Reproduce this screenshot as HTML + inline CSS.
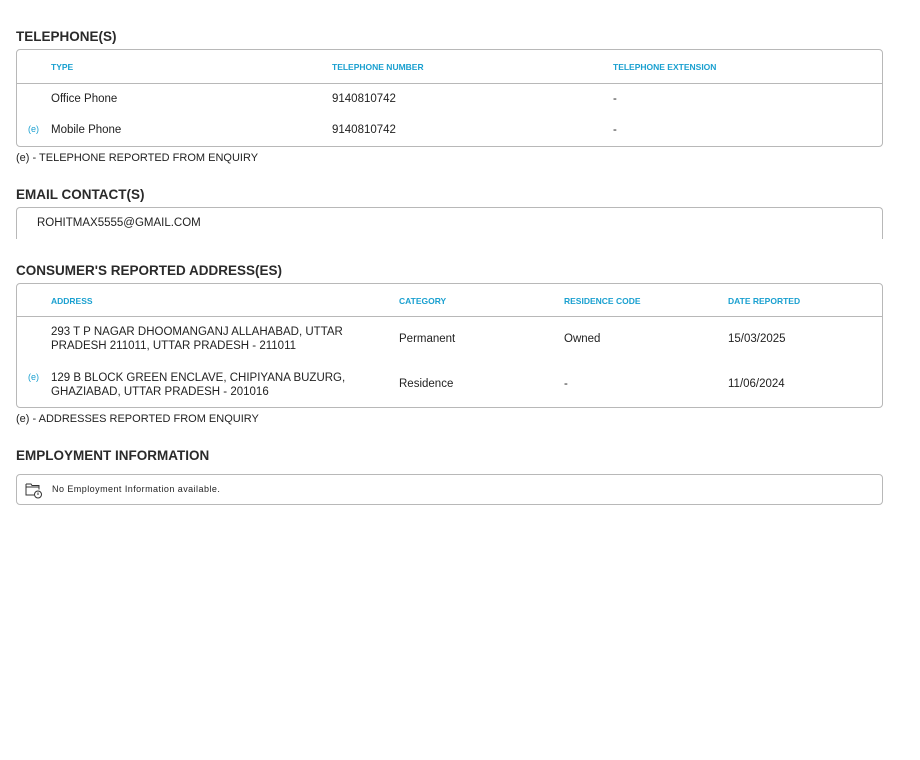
<!DOCTYPE html>
<html><head><style>
body{margin:0;width:920px;height:760px;background:#fff;font-family:"Liberation Sans",sans-serif;color:#222;position:relative}
.a{position:absolute;white-space:nowrap}
.h{font-size:13.5px;font-weight:bold;color:#2a2a2a;letter-spacing:0px}
.box{position:absolute;border:1px solid #b8b8b8;border-radius:4px;box-sizing:border-box}
.th{font-size:8.5px;font-weight:bold;color:#1aa0d0}
.t{font-size:11.5px}
.e{font-size:9px;color:#1aa0d0}
.line{position:absolute;height:1px;background:#b8b8b8}
</style></head><body>
<div class="a h" style="left:16px;top:29px">TELEPHONE(S)</div>
<div class="box" style="left:16px;top:49px;width:867px;height:98px"></div>
<div class="line" style="left:17px;top:83px;width:865px"></div>
<div class="a th" style="left:51px;top:62px">TYPE</div>
<div class="a th" style="left:332px;top:62px">TELEPHONE NUMBER</div>
<div class="a th" style="left:613px;top:62px">TELEPHONE EXTENSION</div>
<div class="a t" style="left:51px;top:93px">Office Phone</div>
<div class="a t" style="left:332px;top:93px">9140810742</div>
<div class="a t" style="left:613px;top:93px">-</div>
<div class="a e" style="left:28px;top:124px">(e)</div>
<div class="a t" style="left:51px;top:124px">Mobile Phone</div>
<div class="a t" style="left:332px;top:124px">9140810742</div>
<div class="a t" style="left:613px;top:124px">-</div>
<div class="a t" style="left:16px;top:152px;font-size:11px">(e) - TELEPHONE REPORTED FROM ENQUIRY</div>

<div class="a h" style="left:16px;top:187px">EMAIL CONTACT(S)</div>
<div class="box" style="left:16px;top:207px;width:867px;height:40px;border-bottom:none"></div>
<div class="a t" style="left:37px;top:217px">ROHITMAX5555@GMAIL.COM</div>
<div style="position:absolute;left:0;top:239px;width:920px;height:10px;background:#fff"></div>

<div class="a h" style="left:16px;top:263px">CONSUMER'S REPORTED ADDRESS(ES)</div>
<div class="box" style="left:16px;top:283px;width:867px;height:125px"></div>
<div class="line" style="left:17px;top:316px;width:865px"></div>
<div class="a th" style="left:51px;top:296px">ADDRESS</div>
<div class="a th" style="left:399px;top:296px">CATEGORY</div>
<div class="a th" style="left:564px;top:296px">RESIDENCE CODE</div>
<div class="a th" style="left:728px;top:296px">DATE REPORTED</div>
<div class="a t" style="left:51px;top:325px;line-height:14px">293 T P NAGAR DHOOMANGANJ ALLAHABAD, UTTAR<br>PRADESH 211011, UTTAR PRADESH - 211011</div>
<div class="a t" style="left:399px;top:333px">Permanent</div>
<div class="a t" style="left:564px;top:333px">Owned</div>
<div class="a t" style="left:728px;top:333px">15/03/2025</div>
<div class="a e" style="left:28px;top:372px">(e)</div>
<div class="a t" style="left:51px;top:371px;line-height:14px">129 B BLOCK GREEN ENCLAVE, CHIPIYANA BUZURG,<br>GHAZIABAD, UTTAR PRADESH - 201016</div>
<div class="a t" style="left:399px;top:378px">Residence</div>
<div class="a t" style="left:564px;top:378px">-</div>
<div class="a t" style="left:728px;top:378px">11/06/2024</div>
<div class="a t" style="left:16px;top:413px;font-size:11px">(e) - ADDRESSES REPORTED FROM ENQUIRY</div>

<div class="a h" style="left:16px;top:448px">EMPLOYMENT INFORMATION</div>
<div class="box" style="left:16px;top:474px;width:867px;height:31px"></div>
<svg class="a" style="left:25px;top:482px" width="18" height="17" viewBox="0 0 18 17" fill="none" stroke="#333" stroke-width="1"><path d="M1 2h5l1 1.5h7v4"/><path d="M1 2v11h8"/><path d="M1 5h13"/><circle cx="13" cy="12.5" r="3.5"/><path d="M13 10.5v2.5"/></svg>
<div class="a" style="left:52px;top:484px;font-size:9px;letter-spacing:0.45px">No Employment Information available.</div>
</body></html>
